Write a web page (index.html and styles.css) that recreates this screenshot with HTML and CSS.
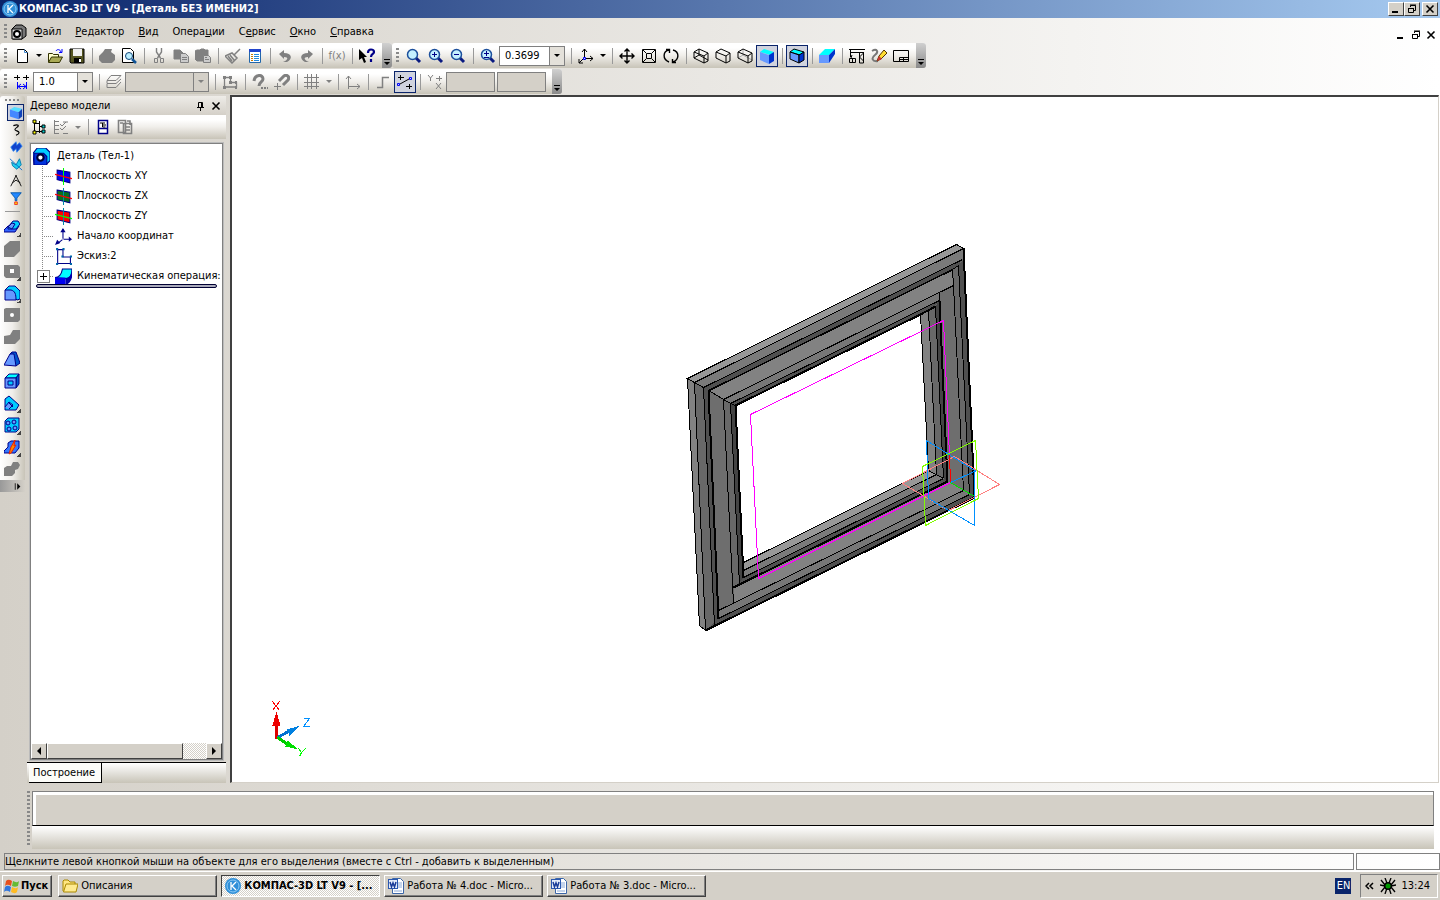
FILE: index.html
```html
<!DOCTYPE html>
<html lang="ru">
<head>
    <meta charset="UTF-8">
    <meta name="viewport" content="width=device-width, initial-scale=1.0">
    <title>КОМПАС-3D LT V9</title>
    <link rel="stylesheet" href="styles.css">
</head>
<body>
    <!-- общие значки -->
    <svg class="defs" aria-hidden="true">
        <symbol id="logo" viewBox="0 0 16 16"><circle cx="8" cy="8" r="8" fill="#2f8fd8"/><circle cx="8" cy="8" r="6" fill="none" stroke="#8cc8f4"/><path d="M6 4v8M11 4L7 8l4 4" fill="none" stroke="#fff" stroke-width="1.300"/></symbol>
        <symbol id="lens" viewBox="0 0 16 16"><path d="M10 10l4 4" stroke="#0a1a80" stroke-width="3"/><circle cx="6.500" cy="6.500" r="5" fill="#c4f0ff" stroke="#1c4f9c" stroke-width="1.500"/></symbol>
        <symbol id="word" viewBox="0 0 16 16"><path d="M4.500.5h8l3 3v12h-11z" fill="#fff" stroke="#3c66a8"/><path d="M10 5h4M10 7h4M6 13h8M10 9h4" stroke="#8aa8d8"/><rect x="0.500" y="1.500" width="9" height="9" fill="#e4ecfa" stroke="#2a58b0"/><path d="M2 4l1.500 5L5 5l1.500 4L8 4" fill="none" stroke="#1a3c98" stroke-width="1.500"/></symbol>
        <symbol id="min" viewBox="0 0 10 10"><path d="M1 8h6" stroke="#000" stroke-width="2"/></symbol>
        <symbol id="restore" viewBox="0 0 10 10"><path d="M3.500 3V1.500h5v5H7M3 1h6M1 4.500h6M1.500 4v4.500h5V4" fill="none" stroke="#000"/></symbol>
        <symbol id="close" viewBox="0 0 10 10"><path d="M1.500 1.500l7 7M8.500 1.500l-7 7" stroke="#000" stroke-width="1.600"/></symbol>
    </svg>

    <header class="title">
        <svg class="ico"><use href="#logo"/></svg>
        <h1>КОМПАС-3D LT V9 - [Деталь БЕЗ ИМЕНИ2]</h1>
        <div class="winBtns">
            <button aria-label="Свернуть"><svg><use href="#min"/></svg></button>
            <button aria-label="Восстановить"><svg><use href="#restore"/></svg></button>
            <button class="last" aria-label="Закрыть"><svg><use href="#close"/></svg></button>
        </div>
    </header>

    <nav class="menu">
        <i class="grip"></i>
        <svg class="ico" viewBox="0 0 16 16"><path d="M1 5l4-4h6l4 3v8l-4 3H2z" fill="#777" stroke="#000"/><path d="M1 5h10v10H1z" fill="#ddd" stroke="#000"/><circle cx="6" cy="10" r="3" fill="#fff" stroke="#000" stroke-width="2"/></svg>
        <button><u>Ф</u>айл</button>
        <button><u>Р</u>едактор</button>
        <button><u>В</u>ид</button>
        <button>Опера<u>ц</u>ии</button>
        <button>С<u>е</u>рвис</button>
        <button><u>О</u>кно</button>
        <button><u>С</u>правка</button>
        <div class="docBtns">
            <button aria-label="Свернуть документ"><svg><use href="#min"/></svg></button>
            <button aria-label="Восстановить документ"><svg><use href="#restore"/></svg></button>
            <button aria-label="Закрыть документ"><svg><use href="#close"/></svg></button>
        </div>
    </nav>

    <div class="bars">
        <!-- стандартная -->
        <div class="bar">
            <i class="grip"></i>
            <button class="tb" aria-label="Создать"><svg viewBox="0 0 16 16"><path d="M3.500 1.500h7l3 3v10h-10z" fill="#fff" stroke="#000"/><path d="M10.500 1.500v3h3" fill="none" stroke="#48c"/></svg></button>
            <button class="drop" aria-label="Тип документа"></button>
            <button class="tb" aria-label="Открыть"><svg viewBox="0 0 16 16"><path d="M1.500 14V5.500h4l1 1h5V9" fill="#ffc" stroke="#330"/><path d="M1.500 14.500l3-5.500h11l-3 5.500z" fill="#aa5" stroke="#330"/><path d="M9 3c1-2 4-2 5 1M15 1v3.500h-3" fill="none" stroke="#00f"/></svg></button>
            <button class="tb" aria-label="Сохранить"><svg viewBox="0 0 16 16"><path d="M1 1h14v14H2l-1-1z" fill="#552" stroke="#000"/><path d="M4 1h9v7H4z" fill="#eee"/><path d="M5 10h7v5H5z" fill="#000"/><path d="M10 11h2v3h-2z" fill="#fff"/></svg></button>
            <i class="sep"></i>
            <button class="tb" aria-label="Печать" disabled><svg viewBox="0 0 16 16"><path d="M4 4l2-3h7l-1 3 4 3v5l-3 3H3l-3-3V8z" fill="#808080"/></svg></button>
            <button class="tb" aria-label="Просмотр"><svg viewBox="0 0 16 16"><path d="M1.500.5h8l3 3v11h-11z" fill="#fff" stroke="#000"/><circle cx="8" cy="8" r="3.500" fill="#bef" stroke="#147"/><path d="M11 11l4 4" stroke="#159" stroke-width="2.500"/></svg></button>
            <i class="sep"></i>
            <button class="tb" aria-label="Вырезать" disabled><svg class="gr" viewBox="0 0 16 16"><path d="M5.500 0v4l4 6M10.500 0v4l-4 6" stroke-width="1.400"/><path d="M3.500 10.500h3v4h-3zM9.500 10.500h3v4h-3z"/></svg></button>
            <button class="tb" aria-label="Копировать" disabled><svg class="gr" viewBox="0 0 16 16"><path d="M1 2h6l3 3v6H1z" fill="#808080"/><path d="M7.500 5.500h5l3 3v6h-8z" fill="#ccc"/><path d="M9 9.500h5M9 11.500h5M3 4.500h2"/></svg></button>
            <button class="tb" aria-label="Вставить" disabled><svg class="gr" viewBox="0 0 16 16"><path d="M0 3l2-1h3l1-1h3l1 1h3v11H2l-2-2z" fill="#808080"/><path d="M8.500 7.500h5l2 2v5h-7z" fill="#ccc"/><path d="M10 11.500h4M10 9.500h2"/></svg></button>
            <i class="sep"></i>
            <button class="tb" aria-label="Копировать свойства" disabled><svg class="gr" viewBox="0 0 16 16"><path d="M15 1L9 7M7 5l5 5M0 8l7-3 5 5-5 5zM3 8l4 5M5 7l4 5" stroke-width="1.500"/></svg></button>
            <button class="tb" aria-label="Свойства"><svg viewBox="0 0 16 16"><path d="M2.500 1.500h11v13h-11z" fill="#fff" stroke="#26a"/><path d="M2 2.500h12" stroke="#24c" stroke-width="3"/><path d="M4 6.500h2M4 8.500h2M4 10.500h2M4 12.500h2" stroke="#c70"/><path d="M7 6.500h5M7 8.500h5M7 10.500h5M7 12.500h5" stroke="#28d"/></svg></button>
            <i class="sep"></i>
            <button class="tb" aria-label="Отменить" disabled><svg viewBox="0 0 16 16"><path d="M2 6l5-4v3c8 0 9 6 3 9H6c5-2 6-5 1-5v2z" fill="#808080"/></svg></button>
            <button class="tb" aria-label="Повторить" disabled><svg viewBox="0 0 16 16"><path d="M14 6L9 2v3c-8 0-9 6-3 9h4c-5-2-6-5-1-5v2z" fill="#808080"/></svg></button>
            <i class="sep"></i>
            <button class="tb fx" disabled>f(x)</button>
            <i class="sep"></i>
            <button class="tb" aria-label="Что это такое?"><svg viewBox="0 0 16 16"><path d="M0 1l8 8H5l2 5-2 1-2-5-3 2z" fill="#000"/><path d="M9 5c0-5 6-4 6-1 0 2-3 2-3 5M12 11v3" fill="none" stroke="#008" stroke-width="2.200"/></svg></button>
            <button class="cap" aria-label="Параметры панели"></button>
        </div>
        <!-- вид -->
        <div class="bar">
            <i class="grip"></i>
            <button class="tb" aria-label="Увеличить рамкой"><svg><use href="#lens"/></svg></button>
            <button class="tb" aria-label="Увеличить"><svg viewBox="0 0 16 16"><use href="#lens"/><path d="M4 6.500h5M6.500 4v5" stroke="#008"/></svg></button>
            <button class="tb" aria-label="Уменьшить"><svg viewBox="0 0 16 16"><use href="#lens"/><path d="M4 6.500h5" stroke="#008"/></svg></button>
            <i class="sep"></i>
            <button class="tb" aria-label="Приблизить"><svg viewBox="0 0 16 16"><use href="#lens"/><path d="M4 5.500h5M6.500 3v5M4 9.500h5" stroke="#008"/></svg></button>
            <span class="combo zoomBox"><select aria-label="Масштаб"><option>0.3699</option></select></span>
            <i class="sep"></i>
            <button class="tb" aria-label="Ориентация"><svg class="bk" viewBox="0 0 16 16"><path d="M6.500 10V1M4 4l2.500-3L9 4M8 10.500h7M12 8l3 2.500-3 2.500M5 11l-4 4M1 11v4h4"/><path d="M5.500 9.500h2v2h-2z" stroke="#00f"/></svg></button>
            <button class="drop" aria-label="Список ориентаций"></button>
            <i class="sep"></i>
            <button class="tb" aria-label="Сдвинуть"><svg class="bk" viewBox="0 0 16 16"><path d="M8 1v14M1 8h14M5.500 3.500L8 1l2.500 2.500M5.500 12.500L8 15l2.500-2.500M3.500 5.500L1 8l2.500 2.500M12.500 5.500L15 8l-2.500 2.500" stroke-width="1.400"/></svg></button>
            <button class="tb" aria-label="Показать все"><svg class="bk" viewBox="0 0 16 16"><path d="M1.500 1.500h13v13h-13zM5.500 5.500h5v5h-5zM2 2l3 3M14 2l-3 3M2 14l3-3M14 14l-3-3"/></svg></button>
            <button class="tb" aria-label="Повернуть"><svg class="bk" viewBox="0 0 16 16"><path d="M6 14C-1 11 0 3 6 2M10 2c7 2 6 10 0 12M3 1.500h3.500V5M13 14.500H9.500V11" stroke-width="1.400"/></svg></button>
            <i class="sep"></i>
            <button class="tb" aria-label="Каркас"><svg class="bk" viewBox="0 0 16 16"><path d="M1 4l5-3 9 4v8l-4 2-10-5zM1 4l10 4 4-3M11 8v7M6 1v6l-5 3M6 7l9 5"/></svg></button>
            <button class="tb" aria-label="Без невидимых линий"><svg class="bk" viewBox="0 0 16 16"><path d="M1 4l5-3 9 4v8l-4 2-10-5zM1 4l10 4 4-3M11 8v7"/></svg></button>
            <button class="tb" aria-label="Невидимые линии тонкие"><svg class="bk" viewBox="0 0 16 16"><path d="M6 1v6l-5 3M6 7l9 5" stroke="#aaa"/><path d="M1 4l5-3 9 4v8l-4 2-10-5zM1 4l10 4 4-3M11 8v7"/></svg></button>
            <button class="tb on" aria-label="Полутоновое"><svg viewBox="0 0 16 16"><path d="M1 4l4-3 10 3-4 3z" fill="#0ff"/><path d="M1 4l9 3v9l-9-4z" fill="#69f"/><path d="M10 7l5-3v9l-5 3z" fill="#03c"/></svg></button>
            <i class="sep"></i>
            <button class="tb on" aria-label="Полутоновое с каркасом"><svg viewBox="0 0 16 16" stroke="#000"><path d="M1 4l4-3 10 3-4 3z" fill="#0ff"/><path d="M1 4l9 3v8l-9-4z" fill="#69f"/><path d="M10 7l5-3v8l-5 3z" fill="#03c"/></svg></button>
            <i class="sep"></i>
            <button class="tb" aria-label="Перспектива"><svg viewBox="0 0 16 16"><path d="M0 7l6-6h10l-6 6z" fill="#0ff"/><path d="M0 7h10v8H0z" fill="#69f"/><path d="M10 7l6-6v5l-6 9z" fill="#03c"/></svg></button>
            <i class="sep"></i>
            <button class="tb" aria-label="Перестроить"><svg class="bk" viewBox="0 0 16 16"><path d="M0 1.500h16M1 4.500h14M1.500 2v7M10.500 5v10h4V5l-4 4 4 4M.5 10.500h6v4h-6zM3.500 10v5M2 10l1-3"/></svg></button>
            <button class="tb" aria-label="Эскиз"><svg viewBox="0 0 16 16"><path d="M1 3c5-3 7 1 3 4s-3 7 3 6" fill="none" stroke="#777" stroke-width="2"/><path d="M6 13l2-5 5-6 3 3-6 6z" fill="#fd3" stroke="#530"/><path d="M6 13l2-5 3 3z" fill="#c33"/></svg></button>
            <button class="tb" aria-label="Чертеж"><svg class="bk" viewBox="0 0 16 16"><path d="M.5 2.500h15v11H.5zM6.500 13V9.500H15M6 11.500h9M10.500 10v4"/></svg></button>
            <button class="cap" aria-label="Параметры панели"></button>
        </div>
    </div>

    <div class="bars">
        <!-- текущее состояние -->
        <div class="bar">
            <i class="grip"></i>
            <button class="tb" aria-label="Шаг курсора"><svg class="bk" viewBox="0 0 16 16"><path d="M0 3.500h6M3.500 1v5M9 3.500h6M12.500 1v5"/><path d="M3.500 8v7M12.500 8v7M4 12.500h8M7 10l-3 2.500L7 15M9 10l3 2.500L9 15" stroke="#00f"/></svg></button>
            <span class="combo stepBox"><select aria-label="Шаг"><option>1.0</option></select></span>
            <i class="sep"></i>
            <button class="tb" aria-label="Слои" disabled><svg class="gr" viewBox="0 0 16 16"><path d="M5 1.500h10l-5 5H1zM1 7v2.500h9L15 5M1 10v3.500h9L15 8"/></svg></button>
            <span class="combo layerBox off"><select aria-label="Слой" disabled></select></span>
            <i class="sep"></i>
            <button class="tb" aria-label="Локальная система" disabled><svg class="gr" viewBox="0 0 16 16"><path d="M2.500 3v10h12V8.500h-6v-5H2.500" stroke-width="1.300"/><path d="M1 2h3v3H1zM7 2h3v3H7zM13 7h2v3h-2zM13 12h2v3h-2zM1 12h3v3H1zM7 7h3v3H7z" fill="#808080" stroke="none"/></svg></button>
            <i class="sep"></i>
            <button class="tb" aria-label="Настройка привязок" disabled><svg class="gr" viewBox="0 0 16 16"><path d="M2 7c1-7 9-7 9-2 0 3-4 3-4 7" stroke-width="3"/><path d="M9 14h2M12 14h2M15 14h1" stroke-width="2"/></svg></button>
            <button class="tb" aria-label="Запретить привязки" disabled><svg class="gr" viewBox="0 0 16 16"><path d="M5 7l5-5c3-2 6 1 4 4l-5 5" stroke-width="3"/><path d="M0 12.500h7M3.500 9v7"/></svg></button>
            <i class="sep"></i>
            <button class="tb" aria-label="Сетка" disabled><svg class="gr" viewBox="0 0 16 16"><path d="M0 3.500h15M0 8.500h15M0 12.500h15M3.500 0v15M7.500 0v15M12.500 0v15"/></svg></button>
            <button class="drop off" aria-label="Параметры сетки" disabled></button>
            <i class="sep"></i>
            <button class="tb" aria-label="Оси" disabled><svg class="gr" viewBox="0 0 16 16"><path d="M3.500 15V2M1 5l2.500-3L6 5M3 12.500h12M12 10l3 2.500-3 2.500"/></svg></button>
            <i class="sep"></i>
            <button class="tb" aria-label="Ортогональное черчение" disabled><svg class="gr" viewBox="0 0 16 16"><path d="M2 13.500h5.500v-10H14" stroke-width="1.500"/></svg></button>
            <button class="tb on" aria-label="Округление"><svg class="bk" viewBox="0 0 16 16"><path d="M1 3.500h6M3.500 1v5M9 12.500h6M12.500 10v5M3 10l9-5"/><path d="M.5 9.500h2v2h-2zM12.500 3.500h2v2h-2z" stroke="#00f"/></svg></button>
            <i class="sep"></i>
            <button class="tb" aria-label="Координаты" disabled><svg class="gr" viewBox="0 0 16 16"><path d="M1 1l2.500 3L6 1M3.500 4v3M9 4.500h6M12.500 2v5M9 9l5 6M14 9l-5 6"/></svg></button>
            <input class="coord" aria-label="Y" disabled>
            <input class="coord" aria-label="X" disabled>
            <button class="cap" aria-label="Параметры панели"></button>
        </div>
    </div>

    <main class="work">
        <div class="side">
            <i class="gripTop"></i>
            <button class="sm on" aria-label="Редактирование детали"><svg viewBox="0 0 16 16"><path d="M1 4l5-3 9 2-4 4z" fill="#5df"/><path d="M1 4l10 3v8L1 12z" fill="#48f"/><path d="M11 7l4-4v9l-4 3z" fill="#14b"/></svg></button>
            <button class="sm" aria-label="Пространственные кривые"><svg class="bk" viewBox="0 0 16 16"><path d="M5 3c6-2 7 0 4 2S6 8 9 9s4 3-1 5" stroke-width="1.300"/></svg></button>
            <button class="sm" aria-label="Поверхности"><svg viewBox="0 0 16 16"><path d="M2 8l6-6 1 4 3-3 3 4-6 7-1-4-3 3z" fill="#14c" stroke="#38e"/></svg></button>
            <button class="sm" aria-label="Вспомогательная геометрия"><svg viewBox="0 0 16 16"><path d="M3 6l5 3 4-7 2 7-5 5-5-4z" fill="#2ce" stroke="#07a"/><path d="M1 2l14 13" stroke="#06c"/></svg></button>
            <button class="sm" aria-label="Измерения"><svg class="bk" viewBox="0 0 16 16"><path d="M2 14L8 2l6 12M4 10l4-3 5 3M7 2h2"/></svg></button>
            <button class="sm" aria-label="Фильтры"><svg viewBox="0 0 16 16"><path d="M2 2h12L9 8v3H7V8z" fill="#28f" stroke="#05a"/><path d="M6.500 12.500h3v3h-3z" fill="#fd0" stroke="#e22"/></svg></button>
            <i class="sepH"></i>
            <button class="big more" aria-label="Операция выдавливания"><svg viewBox="0 0 16 16" stroke="#008"><path d="M0 11l4-4h11l-4 6H0z" fill="#36f"/><path d="M4 8l5-6h5l2 3-4 5H4z" fill="#0cf"/><path d="M4 8l4-4 3 1-3 5z" fill="#69f"/></svg></button>
            <button class="big" aria-label="Вырезать" disabled><svg viewBox="0 0 16 16"><path d="M0 5l6-5h10v10l-6 6H0z" fill="#808080"/></svg></button>
            <button class="big more" aria-label="Отверстие" disabled><svg viewBox="0 0 16 16"><path d="M0 2h14l2 2v11H2l-2-2z" fill="#808080"/><path d="M6 6h4v4H6z" fill="#fff"/></svg></button>
            <button class="big more" aria-label="Скругление"><svg viewBox="0 0 16 16" stroke="#008"><path d="M1 5l4-4h6l5 5v8l-3 1z" fill="#0cf"/><path d="M1 5h6c4 1 5 4 5 10H1z" fill="#69f"/></svg></button>
            <button class="big" aria-label="Круглое отверстие" disabled><svg viewBox="0 0 16 16"><path d="M0 2l2-1h14v12l-2 2H0z" fill="#808080"/><circle cx="8" cy="8" r="2" fill="#fff"/></svg></button>
            <button class="big" aria-label="Ребро жесткости" disabled><svg viewBox="0 0 16 16"><path d="M0 7l6-1 3-5h7v9l-5 5H0z" fill="#808080"/></svg></button>
            <button class="big" aria-label="Уклон"><svg viewBox="0 0 16 16" stroke="#008"><path d="M6 3l2-2h4l4 11-4 3z" fill="#05c"/><path d="M0 14L6 3h4l2 12z" fill="#69f"/></svg></button>
            <button class="big" aria-label="Оболочка"><svg viewBox="0 0 16 16" stroke="#008"><path d="M1 5l4-4h10l-3 4z" fill="#0ff"/><path d="M12 5l3-4v10l-3 4z" fill="#05c"/><path d="M1 5h11v10H1z" fill="#69f"/><path d="M4 8h5v4H4z" fill="#0cf"/></svg></button>
            <button class="big more" aria-label="Сечение"><svg viewBox="0 0 16 16" stroke="#008"><path d="M1 4l4-3 10 9-3 5H1z" fill="#0cf"/><path d="M4 7l5 5M1 12l4-5 4 3-4 4" fill="#69f"/></svg></button>
            <button class="big more" aria-label="Массив"><svg viewBox="0 0 16 16" stroke="#008"><path d="M1 4l3-3h11v11l-3 3H1z" fill="#0cf"/><g fill="#69f"><circle cx="4" cy="6" r="2"/><circle cx="10" cy="5" r="2"/><circle cx="5" cy="12" r="2"/><circle cx="11" cy="11" r="2"/></g></svg></button>
            <button class="big more" aria-label="Деталь-заготовка"><svg viewBox="0 0 16 16"><path d="M0 12l4-4V4l3-2h8v7l-4 5H0z" fill="#37f" stroke="#008"/><path d="M5 15l2-7 4-7-1 6 2-1-5 8z" fill="#f80" stroke="#e20"/></svg></button>
            <button class="big" aria-label="Булева операция" disabled><svg viewBox="0 0 16 16"><path d="M0 7l3-2h4l2-4h5l2 3-2 4-3 1v3l-3 3H0z" fill="#808080"/></svg></button>
            <button class="sideEnd" aria-label="Развернуть"><svg viewBox="0 0 10 8"><path d="M1 0v8h1V0zM4 0l4 4-4 4z"/></svg></button>
        </div>

        <section class="tree">
            <div class="treeHead">
                <h2>Дерево модели</h2>
                <button aria-label="Закрепить"><svg class="bk" viewBox="0 0 10 10"><path d="M2 6.500h7M3.500 6V1.500h4V6M6.500 1v5M5.500 7v3"/></svg></button>
                <button aria-label="Закрыть дерево"><svg><use href="#close"/></svg></button>
            </div>
            <div class="bar treeBar">
                <button class="tb" aria-label="Структура"><svg class="bk" viewBox="0 0 16 16"><path d="M3.500 1v13M4 4.500h4M4 12.500h4M8.500 2v12M9 7.500h3M9 12.500h3"/><path d="M2 1h3v3H2zM2 12h3v3H2z" fill="#ff0"/><path d="M11 6h3v3h-3zM11 11h3v3h-3z" fill="#0cc"/></svg></button>
                <button class="tb" aria-label="Состав" disabled><svg class="gr" viewBox="0 0 16 16"><path d="M1.500 1v14M2 2.500h4M2 6.500h4M2 10.500h4M2 14.500h4M7 5l2 2 4-4M7 9l2 2 4-4M10 14.500h5M10 3h5"/></svg></button>
                <button class="drop off" aria-label="Список состава" disabled></button>
                <i class="sep"></i>
                <button class="tb" aria-label="Отношения"><svg viewBox="0 0 16 16"><path d="M3.500 1.500h9v13h-9zM3 9.500h9" fill="#fff" stroke="#008" stroke-width="1.500"/><path d="M5 4h5M7.500 4v4h3M8 6h3" fill="none" stroke="#000"/></svg></button>
                <button class="tb" aria-label="Дополнительное окно" disabled><svg class="gr" viewBox="0 0 16 16"><path d="M1.500 1.500h7v12h-7zM6.500 4.500h8v10h-8zM3 4h3M8 8h5M8 11h5M10 2h3v4" stroke-width="1.600"/></svg></button>
            </div>
            <div class="treeBox">
                <ul>
                    <li class="root"><svg viewBox="0 0 16 16"><path d="M0 5l4-5h8l4 4v8l-4 4H1z" fill="#0cf" stroke="#008"/><path d="M1 5h9l3 3v8H1z" fill="#03d" stroke="#008"/><circle cx="7" cy="9" r="3" fill="#fff" stroke="#003" stroke-width="2"/></svg>Деталь (Тел-1)</li>
                    <li><svg viewBox="0 0 16 16"><path d="M2 2l12 2v10L2 11z" fill="#00e" stroke="#008"/><path d="M8 0v16" stroke="#0f0"/><path d="M0 6l16 4" stroke="#f00"/></svg>Плоскость XY</li>
                    <li><svg viewBox="0 0 16 16"><path d="M2 2l12 2v10L2 11z" fill="#087020" stroke="#008"/><path d="M8 0v16" stroke="#08a"/><path d="M0 6l16 4" stroke="#f00"/></svg>Плоскость ZX</li>
                    <li><svg viewBox="0 0 16 16"><path d="M2 2l12 2v10L2 11z" fill="#f00" stroke="#008"/><path d="M8 0v16" stroke="#08a"/><path d="M0 6l16 4" stroke="#0f0"/></svg>Плоскость ZY</li>
                    <li><svg viewBox="0 0 16 16"><path d="M7.500 10V1M8 10.500h6M7 11l-5 4" stroke="#008"/><path d="M5 4l2.500-4L10 4zM13 8l3 2.500-3 2.500zM0 16l2-5 3 3z" fill="#008"/></svg>Начало координат</li>
                    <li><svg viewBox="0 0 16 16"><path d="M2.500 1.500h5v7h7v6h-12z" fill="#fff" stroke="#008"/><path d="M1 0h2v2H1zM7 0h2v2H7zM14 7h2v2h-2zM14 14h2v2h-2zM1 14h2v2H1zM6 7h2v2H6z" fill="#06a"/></svg>Эскиз:2</li>
                    <li class="plus"><svg viewBox="0 0 16 16"><path d="M0 9c4 0 6-3 7-8h9c0 5-2 9-6 9z" fill="#0ff" stroke="#008"/><path d="M0 9h10v7H0z" fill="#00e"/><path d="M10 10c4-1 6-4 6-9v8c-1 4-3 6-6 7z" fill="#00a"/></svg>Кинематическая операция:</li>
                </ul>
                <div class="endLine"></div>
                <div class="scroll">
                    <button aria-label="Влево"><svg viewBox="0 0 8 8"><path d="M6 0v8L2 4z"/></svg></button>
                    <div class="thumb"></div>
                    <button class="right" aria-label="Вправо"><svg viewBox="0 0 8 8"><path d="M2 0v8l4-4z"/></svg></button>
                </div>
            </div>
            <div class="tabs"><button>Построение</button></div>
        </section>

        <section class="view">
            <svg class="scene" role="img" aria-label="Модель рамки">
                <g transform="translate(-231.500 -96.500)">
                    <path d="M687 378L956 244L963 248L974 497L705 630L699 625zM735 405L743 562L928 470L920 314z" fill="#686868" fill-rule="evenodd"/>
                    <g stroke="none">
                        <!-- верхняя планка -->
                        <path d="M687 378L956 244L963 248L694 382z" fill="#989898"/>
                        <path d="M694 382L963 248L962 259L703 387z" fill="#7a7a7a"/>
                        <path d="M703 387L962 259L958 265L952 269L708 390z" fill="#505050"/>
                        <path d="M708 390L952 269L953 285L723 399z" fill="#828282"/>
                        <path d="M723 399L939 292L939 300L730 403z" fill="#777"/>
                        <path d="M730 403L939 300L934 306L735 405z" fill="#505050"/>
                        <!-- левая -->
                        <path d="M687 378L694 382L705 630L699 625z" fill="#828282"/>
                        <path d="M694 382L703 387L714 625L705 630z" fill="#686868"/>
                        <path d="M703 387L708 390L718 618L714 625z" fill="#505050"/>
                        <path d="M708 390L723 399L733 603L718 610z" fill="#6e6e6e"/>
                        <path d="M723 399L730 403L739 584L733 587z" fill="#686868"/>
                        <path d="M730 403L735 405L743 577L739 584z" fill="#444"/>
                        <!-- правая -->
                        <path d="M920 314L928 310L936 474L928 470z" fill="#828282"/>
                        <path d="M928 310L935 306L943 478L936 474z" fill="#686868"/>
                        <path d="M935 306L939 300L947 481L943 478z" fill="#444"/>
                        <path d="M939 292L953 285L963 490L947 481z" fill="#6e6e6e"/>
                        <path d="M952 269L958 265L969 494L963 490z" fill="#686868"/>
                        <path d="M958 265L963 259L974 497L969 494z" fill="#505050"/>
                        <!-- нижняя -->
                        <path d="M743 562L928 470L936 474L743 570z" fill="#989898"/>
                        <path d="M743 570L936 474L943 478L743 577z" fill="#7a7a7a"/>
                        <path d="M743 577L943 478L947 481L733 587z" fill="#505050"/>
                        <path d="M733 587L947 481L963 490L733 603z" fill="#828282"/>
                        <path d="M718 610L963 490L969 494L718 618z" fill="#777"/>
                        <path d="M718 618L969 494L974 497L705 630z" fill="#505050"/>
                    </g>
                    <g fill="none" stroke="#000">
                        <path d="M687 378L956 244L963 248L694 382zM687 378L699 625L705 630L694 382M703 387L962 259M703 387L714 625M694 382L703 387M708 390L730 403L735 405M723 399L953 285L952 269M723 399L733 603M730 403L939 300M730 403L739 584M958 265L969 494M952 269L958 265M953 285L963 490M928 310L936 474M935 306L943 478M939 292V300M920 314L928 470L743 562M928 470L943 478M743 570L936 474M743 577L943 478M718 610L963 490M718 618L969 494M708 390L952 269M709 390L953 269"/>
                        <path d="M708 390L718 618M735 405L920 314L935 306M735 405L743 577M733 587L947 481L939 300M963 248L974 497L705 630" stroke-width="2"/>
                    </g>
                    <g fill="none">
                        <path d="M949 455L943 320L750 414L758 578L950 482" stroke="#f0f"/>
                        <path d="M902 483L954 456L999 484L948 510z" stroke="#ff8080"/>
                        <path d="M926 440L974 470V525L928 498zM950 482L976 470" stroke="#0090ff"/>
                        <path d="M922 466L975 440L978 498L925 525z" stroke="#80ff00"/>
                        <path d="M949 455L950 482" stroke="#f00"/>
                        <path d="M950 482L974 496" stroke="#00e000"/>
                    </g>
                    <!-- оси -->
                    <g>
                        <path d="M276 738V724" stroke="#d00" stroke-width="3"/><path d="M272 725L276 711L280 725z" fill="#e00"/>
                        <path d="M277 737L288 731" stroke="#0070d0" stroke-width="3"/><path d="M286 729L300 725L289 735z" fill="#0080e0"/>
                        <path d="M277 737L286 743" stroke="#0c0" stroke-width="3"/><path d="M287 740L298 749L285 746z" fill="#0d0"/>
                        <path d="M272 701L279 710M279 701L272 710" stroke="#f00"/>
                        <path d="M303 718H309L303 726H309" stroke="#0090ff" fill="none"/>
                        <path d="M298 748L301 752L305 748M301 752L299 756" stroke="#0f0" fill="none"/>
                    </g>
                </g>
            </svg>
        </section>
    </main>

    <div class="props">
        <i class="grip"></i>
        <div class="propsIn">
            <div class="propsTop"></div>
            <div class="propsTabs"></div>
        </div>
    </div>

    <div class="status">
        <p>Щелкните левой кнопкой мыши на объекте для его выделения (вместе с Ctrl - добавить к выделенным)</p>
        <p class="small"></p>
    </div>

    <footer class="task">
        <button class="start"><svg class="ico" viewBox="0 0 16 16"><path d="M2 3c2-2 4-1 6 0L7 8C5 7 3 6 1 8z" fill="#e8501c"/><path d="M9 3c2 1 4 2 6 0l-1 5c-2 1-4 1-6 0z" fill="#6b3"/><path d="M1 9c2-2 4-1 6 0l-1 5c-2-1-4-2-6 0z" fill="#37d"/><path d="M8 9c2 1 4 2 6 0l-1 5c-2 2-4 1-6 0z" fill="#fb2"/></svg>Пуск</button>
        <button class="win"><svg class="ico" viewBox="0 0 16 16"><path d="M1 13V3l1-1h4l2 2h5v2" fill="#ffe680" stroke="#a80"/><path d="M1.500 14L4 6h12l-2 8z" fill="#ffeb90" stroke="#a80"/></svg>Описания</button>
        <button class="win active"><svg class="ico"><use href="#logo"/></svg>КОМПАС-3D LT V9 - [...</button>
        <button class="win"><svg class="ico"><use href="#word"/></svg>Работа № 4.doc - Micro...</button>
        <button class="win"><svg class="ico"><use href="#word"/></svg>Работа № 3.doc - Micro...</button>
        <button class="lang">EN</button>
        <div class="tray">
            <button aria-label="Показать скрытые значки"><svg class="bk" viewBox="0 0 10 8"><path d="M4 1L1 4l3 3M8 1L5 4l3 3" stroke-width="1.500"/></svg></button>
            <svg class="ico" viewBox="0 0 16 16"><path d="M1 2l4 5M5 0l2 5M11 0L9 5M15 2l-4 5M0 7l5 1M16 7l-5 1M1 14l4-5M5 16l2-6M11 16l-2-6M15 14l-4-5" stroke="#000" stroke-width="1.300"/><circle cx="8" cy="8" r="4"/><circle cx="8" cy="8" r="2.500" fill="#090"/></svg>
            <time>13:24</time>
        </div>
    </footer>
</body>
</html>
```
FILE: styles.css
```css
*{
    margin: 0;
    padding: 0;
    box-sizing: border-box;
}
body{
    height: 100vh;
    display: flex;
    flex-direction: column;
    overflow: hidden;
    background: linear-gradient(90deg,#d4d0c8,#fff);
    font-family: "DejaVu Sans Condensed","Noto Sans",sans-serif;
    font-size: 11px;
    line-height: 14px;
    color: #000;
}
button,input,select{
    font: inherit;
    color: inherit;
    background: transparent;
    border: none;
    outline: none;
    border-radius: 0;
}
button{
    display: flex;
    align-items: center;
    justify-content: center;
    flex: none;
    white-space: nowrap;
}
svg{
    display: block;
    flex: none;
}
.defs{
    display: none;
}
.ico{
    width: 16px;
    height: 16px;
}
.bk{
    fill: none;
    stroke: #000;
}
.gr{
    fill: none;
    stroke: #808080;
}

/* заголовок */
.title{
    height: 18px;
    flex: none;
    display: flex;
    align-items: center;
    gap: 1px;
    padding: 0 2px;
    color: #fff;
    background: linear-gradient(90deg,#0a246a,#a6caf0);
}
.title h1{
    flex: 1;
    font-size: 11px;
    font-weight: bold;
}
.winBtns,.docBtns{
    display: flex;
}
.winBtns button{
    width: 16px;
    height: 14px;
    background: #d4d0c8;
    border: 1px solid;
    border-color: #fff #404040 #404040 #fff;
}
.winBtns .last{
    margin-left: 2px;
}
.winBtns svg,.docBtns svg{
    width: 10px;
    height: 10px;
}

/* меню */
.menu{
    height: 25px;
    flex: none;
    display: flex;
    align-items: center;
    padding-top: 2px;
}
.menu>button{
    display: block;
    padding: 0 7px;
}
.docBtns{
    margin-left: auto;
    padding: 6px 2px 0 0;
}
.docBtns button{
    width: 15px;
    height: 14px;
}
.grip{
    width: 3px;
    height: 16px;
    margin: 0 4px;
    flex: none;
    background: repeating-linear-gradient(#888 0 2px,transparent 2px 4px);
}

/* панели инструментов */
.bars{
    height: 26px;
    flex: none;
    display: flex;
}
.bar{
    height: 25px;
    flex: none;
    display: flex;
    align-items: center;
    background: linear-gradient(#fff 20%,#f0eeea 50%,#c8c4b8);
    border-radius: 3px;
}
.tb{
    width: 22px;
    height: 22px;
}
.tb svg{
    width: 16px;
    height: 16px;
}
.on{
    background: #d0d3de;
    border: 1px solid #0a246a;
}
.fx{
    color: #808080;
}
.sep{
    width: 1px;
    height: 16px;
    margin: 0 3px 0 4px;
    flex: none;
    background: #999;
}
.drop{
    width: 11px;
    height: 22px;
}
.drop::after,.combo::after{
    content: "";
    border: 3px solid transparent;
    border-top-color: #000;
    border-bottom: none;
}
.off::after,.off.combo::after{
    border-top-color: #808080;
}
.cap{
    width: 10px;
    height: 25px;
    margin-left: 4px;
    align-items: flex-end;
    padding-bottom: 3px;
    background: linear-gradient(#d0d0d0,#8a8a8a);
    border-radius: 0 3px 3px 0;
}
/* черточка и стрелка вниз */
.cap::after{
    content: "";
    width: 6px;
    height: 6px;
    background: #000;
    clip-path: polygon(0 0,100% 0,100% 1px,0 1px,0 3px,100% 3px,50% 100%,0 3px);
}
.combo{
    height: 20px;
    margin-right: 2px;
    display: flex;
    align-items: center;
    border: 1px solid #808080;
    background: linear-gradient(270deg,#e4e1da 14px,#808080 14px 15px,#fff 15px);
}
.combo::after{
    margin-right: 4px;
    pointer-events: none;
}
.combo select{
    flex: 1;
    min-width: 0;
    padding-left: 5px;
    appearance: none;
}
.zoomBox{
    width: 66px;
}
.stepBox{
    width: 60px;
}
.layerBox{
    width: 84px;
}
.combo.off{
    background: linear-gradient(270deg,#d4d0c8 14px,#808080 14px 15px,#d4d0c8 15px);
}
.coord{
    width: 49px;
    height: 20px;
    margin-right: 2px;
    background: #d4d0c8;
    border: 1px solid #808080;
}

/* рабочая область */
.work{
    flex: 1;
    min-height: 0;
    display: flex;
}
.side{
    width: 25px;
    flex: none;
    align-self: flex-start;
    margin-top: 1px;
    margin-right: 2px;
    display: flex;
    flex-direction: column;
    background: linear-gradient(90deg,#fff,#f0eeea 50%,#c8c4b8);
    border-radius: 3px;
}
.gripTop{
    width: 15px;
    height: 2px;
    margin: 3px 0 3px 5px;
    background: repeating-linear-gradient(90deg,#888 0 2px,transparent 2px 4px);
}
.sm{
    width: 17px;
    height: 17px;
    margin-left: 7px;
}
.sm svg{
    width: 14px;
    height: 14px;
}
.sepH{
    height: 1px;
    margin: 5px 5px 4px;
    background: #999;
}
.big{
    width: 24px;
    height: 22px;
}
.big svg{
    width: 16px;
    height: 16px;
}
.more{
    background: linear-gradient(135deg,transparent 50%,#444 50%) no-repeat 17px 17px / 4px 4px;
}
.sideEnd{
    height: 12px;
    justify-content: flex-end;
    padding-right: 3px;
    background: linear-gradient(90deg,#999,#d4d0c8);
}
.sideEnd svg{
    width: 8px;
    height: 7px;
}

/* дерево */
.tree{
    width: 199px;
    flex: none;
    display: flex;
    flex-direction: column;
    margin-top: 1px;
    margin-right: 4px;
}
.treeHead{
    height: 19px;
    flex: none;
    display: flex;
    align-items: center;
    padding: 0 2px 0 3px;
    background: linear-gradient(#eeece8,#d4d0c8);
}
.treeHead h2{
    flex: 1;
    font-size: 11px;
    font-weight: normal;
}
.treeHead button{
    width: 16px;
}
.treeHead svg{
    width: 10px;
    height: 10px;
}
.treeBar{
    height: 24px;
    padding-left: 1px;
    border-radius: 0;
}
.treeBar .drop{
    width: 12px;
}
.treeBox{
    flex: 1;
    min-height: 0;
    margin: 4px 3px 2px 3px;
    display: flex;
    flex-direction: column;
    background: #fff;
    border: 1px solid #808080;
    outline: 1px solid #bbb;
}
.treeBox ul{
    list-style: none;
    padding-top: 2px;
    overflow: hidden;
}
.treeBox li{
    height: 20px;
    display: flex;
    align-items: center;
    gap: 5px;
    margin-left: 11px;
    padding-left: 13px;
    white-space: nowrap;
    background-image: repeating-linear-gradient(#888 0 1px,transparent 1px 2px),repeating-linear-gradient(90deg,#888 0 1px,transparent 1px 2px);
    background-repeat: no-repeat;
    background-size: 1px 20px,12px 1px;
    background-position: 0 0,0 10px;
}
.treeBox li svg{
    width: 17px;
    height: 17px;
}
.treeBox .root{
    margin-left: 2px;
    padding-left: 0;
    gap: 7px;
    background: none;
}
.treeBox .plus{
    position: relative;
    background-size: 1px 6px,12px 1px;
}
.plus::before{
    content: "";
    position: absolute;
    left: -5px;
    top: 4px;
    width: 11px;
    height: 11px;
    border: 1px solid #808080;
    background: linear-gradient(#000,#000) center / 7px 1px no-repeat,linear-gradient(#000,#000) center / 1px 7px no-repeat,#fff;
}
.endLine{
    height: 4px;
    flex: none;
    margin: -2px 5px 0;
    background: #aab;
    border: 1px solid #003;
    border-radius: 2px;
    z-index: 1;
}
.scroll{
    height: 16px;
    flex: none;
    margin-top: auto;
    display: flex;
    background: repeating-conic-gradient(#fff 0 25%,#d4d0c8 0 50%) 0 0 / 2px 2px;
}
.scroll button,.thumb{
    width: 16px;
    background: #d4d0c8;
    border: 1px solid;
    border-color: #fff #404040 #404040 #fff;
}
.scroll svg{
    width: 8px;
    height: 8px;
}
.thumb{
    width: 71%;
}
.scroll .right{
    margin-left: auto;
}
.tabs{
    height: 21px;
    flex: none;
    display: flex;
    border-top: 1px solid #000;
    background: linear-gradient(#fff,#c8c4b8);
}
.tabs button{
    height: 20px;
    margin-left: 2px;
    padding: 0 6px 0 4px;
    background: #fcfcf8;
    border: 1px solid #000;
    border-width: 0 1px 1px 0;
}
.view{
    flex: 1;
    min-width: 0;
    margin-right: 1px;
    background: #fff;
    border: 2px solid;
    border-color: #404040 #d4d0c8 #d4d0c8 #404040;
    border-width: 2px 1px 1px 2px;
}
.scene{
    width: 100%;
    height: 100%;
    shape-rendering: crispEdges;
}

/* панель свойств */
.props{
    height: 70px;
    flex: none;
    display: flex;
    padding: 8px 6px 4px 22px;
}
.props .grip{
    height: 56px;
    margin: 0 2px 0 5px;
}
.propsIn{
    flex: 1;
}
.propsTop{
    height: 35px;
    background: #d4d0c8;
    border: 1px solid #808080;
    border-bottom-color: #000;
    box-shadow: inset 3px 3px #fff;
}
.propsTabs{
    height: 23px;
    background: linear-gradient(#fff,#c8c4b8);
}
.status{
    height: 18px;
    flex: none;
    display: flex;
    gap: 2px;
    padding-left: 4px;
}
.status p{
    flex: 1;
    height: 17px;
    line-height: 16px;
    border: 1px solid #808080;
    white-space: nowrap;
    overflow: hidden;
}
.status .small{
    flex: 0 0 84px;
}

/* панель задач */
.task{
    height: 29px;
    flex: none;
    display: flex;
    align-items: center;
    gap: 4px;
    padding: 1px 2px 2px;
    background: #d4d0c8;
    border-top: 1px solid #fff;
}
.start,.win{
    height: 22px;
    border: 1px solid;
    border-color: #fff #404040 #404040 #fff;
    box-shadow: inset -1px -1px #808080;
}
.start{
    margin-right: 2px;
    padding: 0 3px 0 1px;
    gap: 1px;
    font-weight: bold;
}
.win{
    flex: 0 1 159px;
    justify-content: flex-start;
    gap: 3px;
    padding-left: 3px;
    overflow: hidden;
}
.active{
    font-weight: bold;
    border-color: #404040 #fff #fff #404040;
    box-shadow: none;
    background: repeating-conic-gradient(#fff 0 25%,#d4d0c8 0 50%) 0 0 / 2px 2px;
}
.lang{
    width: 16px;
    height: 16px;
    margin-left: auto;
    color: #fff;
    background: #0a246a;
}
.tray{
    height: 24px;
    display: flex;
    align-items: center;
    gap: 5px;
    margin-left: 5px;
    padding: 0 7px 0 4px;
    border: 1px solid;
    border-color: #808080 #fff #fff #808080;
}
.tray button svg{
    width: 10px;
    height: 8px;
}
```
